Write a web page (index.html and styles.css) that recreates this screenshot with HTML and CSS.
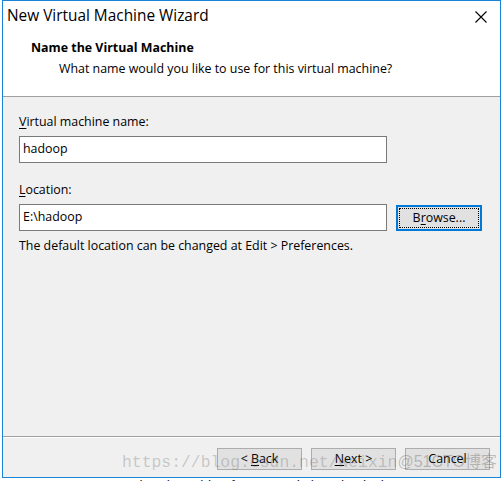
FILE: index.html
```html
<!DOCTYPE html>
<html>
<head>
<meta charset="utf-8">
<link rel="stylesheet" href="styles.css">
</head>
<body>
<div class="window">
  <div class="titlebar">
    <span class="title">New Virtual Machine Wizard</span>
    <svg class="close" width="12" height="12" viewBox="0 0 12 12"><path d="M0.5 0.5 L11.5 11.5 M11.5 0.5 L0.5 11.5" stroke="#000" stroke-width="1.1" fill="none"/></svg>
  </div>
  <div class="header">
    <div class="h-title">Name the Virtual Machine</div>
    <div class="h-sub">What name would you like to use for this virtual machine?</div>
  </div>
  <div class="content">
    <div class="label"><u>V</u>irtual machine name:</div>
    <div class="field">hadoop</div>
    <div class="label loc"><u>L</u>ocation:</div>
    <div class="row">
      <div class="field">E:\hadoop</div>
      <div class="btn browse"><span>B<u>r</u>owse...</span></div>
    </div>
    <div class="info">The default location can be changed at Edit &gt; Preferences.</div>
  </div>
  <div class="footer">
    <div class="btn"><span>&lt; <u>B</u>ack</span></div>
    <div class="btn"><span><u>N</u>ext &gt;</span></div>
    <div class="btn"><span>Cancel</span></div>
  </div>
  <div class="watermark">https://blog.csdn.net/weixin<span class="wm2">@51CTO博客</span></div>
</div>
<div class="below">Create a virtual machine from an existing physical</div>
</body>
</html>
```
FILE: styles.css
```css
html, body {
  margin: 0;
  padding: 0;
}
body {
  width: 503px;
  height: 481px;
  overflow: hidden;
  background: #ffffff;
  font-family: "Open Sans", "Noto Sans", sans-serif;
  font-size: 12.4px;
  color: #000;
}
.window {
  position: relative;
  box-sizing: border-box;
  margin-left: 2px;
  width: 499px;
  height: 478px;
  border: 1px solid #1883d7;
  background: #f0f0f0;
  display: flex;
  flex-direction: column;
}
.titlebar {
  height: 31px;
  background: #fff;
  display: flex;
  align-items: center;
  justify-content: space-between;
  padding: 0 13px 0 4px;
}
.title {
  font-size: 15.4px;
  line-height: 20px;
  margin-top: -1px;
}
.close {
  display: block;
}
.header {
  background: #fff;
  border-bottom: 1px solid #a0a0a0;
  padding-left: 28px;
  box-sizing: border-box;
  height: 65px;
}
.h-title {
  font-weight: bold;
  line-height: 16px;
  margin-top: 8px;
}
.h-sub {
  line-height: 16px;
  margin-top: 5px;
  padding-left: 28px;
}
.content {
  flex: 1;
  padding: 17px 16px 0 16px;
  border-bottom: 1px solid #a0a0a0;
}
.label {
  line-height: 16px;
}
.label u, .btn u {
  text-decoration-thickness: 1px;
  text-underline-offset: 2px;
}
.label.loc {
  margin-top: 19px;
}
.field {
  box-sizing: border-box;
  width: 368px;
  height: 27px;
  margin-top: 6px;
  border: 1px solid #7a7a7a;
  background: #fff;
  padding: 0 3px;
  line-height: 24px;
}
.row {
  display: flex;
  align-items: center;
  gap: 9px;
  margin-top: 6px;
}
.row .field {
  margin-top: 0;
}
.btn {
  box-sizing: border-box;
  width: 85px;
  height: 22px;
  border: 1px solid #adadad;
  background: #e1e1e1;
  display: flex;
  align-items: center;
  justify-content: center;
  line-height: 16px;
  white-space: pre;
}
.browse {
  position: relative;
  width: 86px;
  height: 26px;
  border: 2px solid #0078d7;
}
.browse::after {
  content: "";
  position: absolute;
  inset: 1px;
  border: 1px dotted #000;
}
.info {
  margin-top: 7px;
  line-height: 16px;
}
.footer {
  height: 40px;
  box-sizing: border-box;
  display: flex;
  justify-content: flex-end;
  gap: 9px;
  padding: 10px 10px 0 0;
  border-top: 1px solid #fff;
}
.watermark {
  position: absolute;
  left: 119px;
  top: 451px;
  font-family: "Liberation Mono", monospace;
  font-size: 16.4px;
  line-height: 20px;
  color: rgba(110, 110, 110, 0.32);
  white-space: nowrap;
  pointer-events: none;
}
.wm2 {
  font-family: "Liberation Sans", "Noto Sans CJK SC", sans-serif;
  font-size: 16px;
  color: rgba(90, 90, 90, 0.35);
}
.below {
  margin-left: 75px;
  margin-top: 1px;
  font-family: "Liberation Sans", sans-serif;
  font-size: 14px;
  line-height: 14px;
  color: #222;
  white-space: nowrap;
}
```
